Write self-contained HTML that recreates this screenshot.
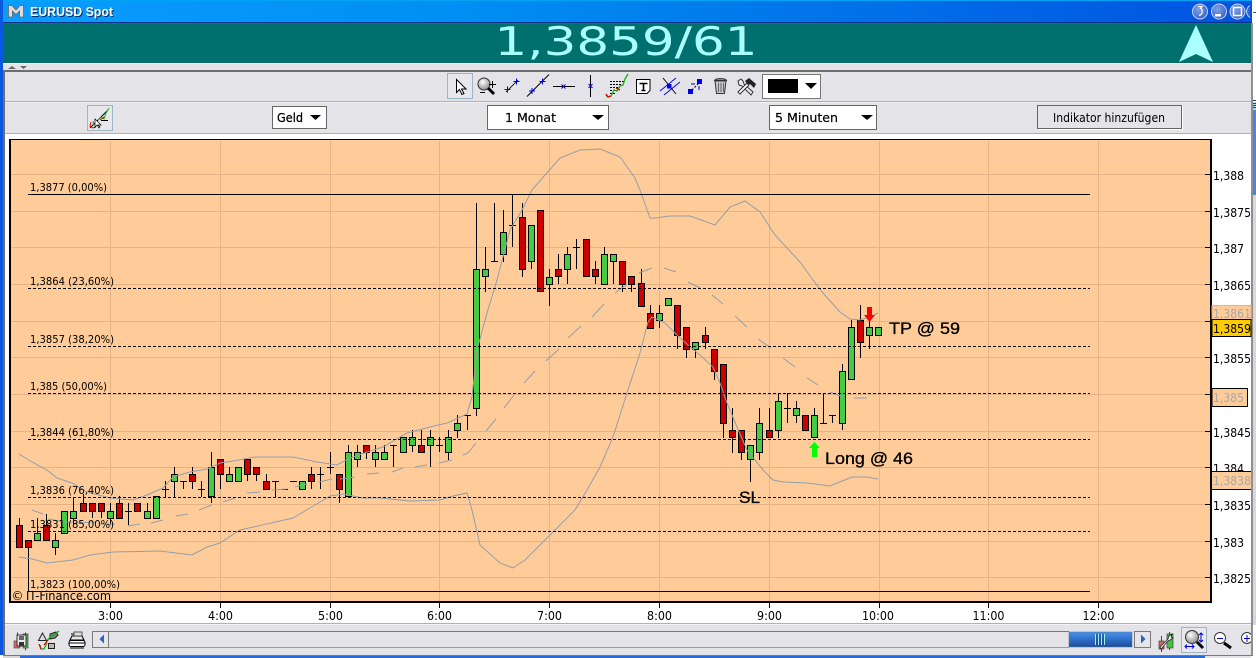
<!DOCTYPE html>
<html><head><meta charset="utf-8"><title>EURUSD Spot</title>
<style>html,body{margin:0;padding:0;background:#fff;overflow:hidden}svg{display:block}
text{font-family:"DejaVu Sans",sans-serif;fill:#000}
.a{font-size:12px}.f{font-size:11px}.g{font-size:12px;fill:#a8a8a8}
.n{font:17px "Liberation Sans",sans-serif;stroke:#000;stroke-width:.3}</style></head>
<body>
<svg xmlns="http://www.w3.org/2000/svg" width="1256" height="658" viewBox="0 0 1256 658">
<defs>
<linearGradient id="tb" x1="0" x2="1" y1="0" y2="0"><stop offset="0" stop-color="#0a9cff"/><stop offset=".35" stop-color="#0090f4"/><stop offset=".7" stop-color="#0070e8"/><stop offset="1" stop-color="#0052e0"/></linearGradient>
<linearGradient id="th" x1="0" x2="0" y1="0" y2="1"><stop offset="0" stop-color="#4a92ea"/><stop offset=".5" stop-color="#2f6fc8"/><stop offset="1" stop-color="#1c4c98"/></linearGradient>
<radialGradient id="wb" cx=".4" cy=".35" r=".7"><stop offset="0" stop-color="#7f9fe8"/><stop offset="1" stop-color="#3a62c8"/></radialGradient>
<radialGradient id="lens" cx=".4" cy=".35" r=".7"><stop offset="0" stop-color="#fff"/><stop offset="1" stop-color="#888"/></radialGradient>
</defs>

<rect width="1256" height="658" fill="#fff"/>
<!-- title bar -->
<rect width="1252" height="23" fill="url(#tb)"/>
<rect width="1252" height="1" fill="#00a4f4"/>
<rect y="22" width="1252" height="1" fill="#03308c"/>
<path d="M8.500 17V5.500h3.500l4 4.500 4-4.500h3.500V17h-4V11l-3.500 3.500L12.500 11v6z" fill="#dcdcdc" stroke="#666" stroke-width=".8"/>
<text x="31" y="17" textLength="83" lengthAdjust="spacingAndGlyphs" style="font:bold 13px 'Liberation Sans',sans-serif;fill:#04306c">EURUSD Spot</text>
<text x="30" y="16" textLength="83" lengthAdjust="spacingAndGlyphs" style="font:bold 13px 'Liberation Sans',sans-serif;fill:#fff">EURUSD Spot</text>
<g stroke="#c8d4f0" stroke-width="1" fill="url(#wb)">
<circle cx="1200" cy="11.500" r="7.500"/><circle cx="1219" cy="11.500" r="7.500"/><circle cx="1237.500" cy="11.500" r="7.500"/><circle cx="1255" cy="11.500" r="7.500" opacity="0"/></g>
<path d="M1250 5.500a7 7 0 0 0 0 12" fill="#3a62c8" stroke="#c8d4f0"/>
<path d="M1198 6.500h4l-1.500 2c2.500 1 2.500 6-1.500 7" fill="none" stroke="#fff" stroke-width="1.200"/>
<rect x="1215" y="14" width="6" height="2.500" fill="#fff"/>
<rect x="1233.500" y="7.500" width="8" height="8" fill="none" stroke="#fff" stroke-width="1.500"/>
<rect x="1253" y="12" width="3" height="1" fill="#555"/>

<!-- side borders -->
<rect x="0" y="0" width="3" height="655" fill="#0a58e2"/>
<rect x="1251" y="23" width="2" height="632" fill="#8f8f8f"/>
<rect x="1253" y="100" width="3" height="1" fill="#333"/>
<rect x="1253" y="102" width="3" height="8" fill="#9cdcf0"/>
<path d="M1253 103.500h3M1253 105.500h3M1253 107.500h3" stroke="#1c4c98"/>
<rect x="1253" y="110" width="3" height="85" fill="#4a86d8"/>
<rect x="1253" y="195" width="3" height="430" fill="#d8d8dc"/>
<rect x="3" y="70" width="2" height="585" fill="#6e6e6e"/>

<!-- price strip -->
<rect x="3" y="23" width="1248" height="40" fill="#00706e"/>
<rect x="3" y="23" width="1248" height="1" fill="#555"/>
<rect x="3" y="63" width="1248" height="1" fill="#fff"/>
<rect x="3" y="64" width="1248" height="6" fill="#e3e3e8"/>
<path d="M8 69l4-3 4 3zM20 66h7l-3.500 3z" fill="#666"/>
<rect x="3" y="70" width="1248" height="2" fill="#6e6e6e"/>
<text x="494.500" y="55" textLength="263" lengthAdjust="spacingAndGlyphs" style="font-size:39px;fill:#aaffff">1,3859/61</text>
<path d="M1196 25L1179 62L1196 54L1213 62Z" fill="#aaffff"/>

<!-- toolbars -->
<rect x="5" y="72" width="1246" height="61" fill="#e3e3e8"/>
<rect x="5" y="101" width="1246" height="1" fill="#9db5c4"/>
<rect x="5" y="102" width="1246" height="1" fill="#f3f3f6"/>
<rect x="5" y="133" width="1246" height="1" fill="#9db5c4"/>

<!-- toolbar icons -->
<rect x="447.500" y="73.500" width="25" height="25" fill="#e8e8ec" stroke="#9db5c4"/>
<path d="M456.500 79.500v13l3-3 2.500 5 2-1-2.500-4.500h4.500z" fill="#fff" stroke="#000"/>
<circle cx="484" cy="84" r="6" fill="url(#lens)" stroke="#333"/>
<path d="M488 88l6 6" stroke="#000" stroke-width="3"/>
<path d="M489 84.500h7M492.500 81v7M480 92.500h5" stroke="#000"/>
<path d="M506 92L518 80" stroke="#000" stroke-width=".8"/>
<path d="M504.500 89.500h6M507.500 86.500v6M513.500 81.500h6M516.500 78.500v6" stroke="#0000e8"/>
<path d="M527 96.500L549 74.500" stroke="#000"/>
<path d="M529 91h6M532 88v6M539.500 81.500h6M542.500 78.500v6" stroke="#0000e8"/>
<path d="M553 86.500H575" stroke="#000"/>
<path d="M561.500 84.500l4 4M565.500 84.500l-4 4" stroke="#0000e8"/>
<path d="M590.500 75V97" stroke="#000"/>
<path d="M588.500 84l4 4M592.500 84l-4 4" stroke="#0000e8"/>
<path d="M610 81.500h14M610 84.500h12M610 87.500h10M610 90.500h8M610 93.500h6" stroke="#000" stroke-dasharray="2 1"/>
<path d="M606 95l2 2 3-1 3-6 3 1 3-5 3-1 2-6 3-5" fill="none" stroke="#12b012" stroke-width="1.300"/>
<path d="M606 94l2 3 3-1M616 88l4 2" fill="none" stroke="#e00000" stroke-width="1.300"/>
<path d="M636.500 79.500h13.500v11l-3 3h-10.500z" fill="#fff" stroke="#000"/>
<path d="M639.500 83.500h8M643.500 83.500v7M641.500 90.500h4" stroke="#000" stroke-width="1.600" fill="none"/>
<path d="M660 91L676 78M664 95L680 82" stroke="#0000e8" stroke-width=".9"/>
<path d="M663 78L676 94" stroke="#000" stroke-width=".9"/>
<rect x="667" y="84" width="4.500" height="4.500" fill="#0000e8"/>
<rect x="688" y="89" width="5" height="5" fill="#0000e8"/><rect x="697" y="79" width="5" height="5" fill="#0000e8"/>
<path d="M692 90L699 83" stroke="#000" stroke-dasharray="2 1.500"/>
<path d="M691 84h4M699 90v-4" stroke="#0000e8"/>
<path d="M714.500 80.500c1-2.500 11-2.500 12 0z" fill="#999" stroke="#333"/>
<path d="M715 81l1.500 12.500h8L726 81z" fill="#c8c8c8" stroke="#333"/>
<path d="M718.500 83v9M721 83v9M723.500 83v9" stroke="#666"/>
<path d="M738 81l3-2 2 2 1 3 9 8-2 3-9-9-3-1z" fill="#e8e8e8" stroke="#333"/>
<path d="M738 92l9-9 2 2-9 9z" fill="#fff" stroke="#333"/>
<path d="M745 81l4-3 7 6-2 4-4-4-2 1z" fill="#222"/>
<!-- colour combo -->
<rect x="762.500" y="74.500" width="58" height="24" fill="#fff" stroke="#777"/>
<rect x="768" y="79" width="30" height="14" fill="#000"/>
<path d="M805 83h12l-6 6z" fill="#000"/>

<!-- second row -->
<rect x="87.500" y="105.500" width="25" height="25" fill="#e8e8ec" stroke="#9db5c4"/>
<path d="M90 128l18-18" stroke="#000"/>
<path d="M91 122l-1 4 3 2 3-1" fill="none" stroke="#e00000"/>
<path d="M93 121l1 4M98 120l3-3 3 2 2-6 3-5" fill="none" stroke="#12b012"/>
<path d="M100 120l4-3" stroke="#e00000"/>
<path d="M101 120.500h7" stroke="#000"/>
<path d="M95 119v8l2-2 2 3 1-1-2-2h3z" fill="#fff" stroke="#000" stroke-width=".7"/>

<rect x="272.500" y="106.500" width="54" height="22" fill="#fff" stroke="#666"/>
<text x="277" y="122" textLength="26" lengthAdjust="spacingAndGlyphs" style="font-size:12px;stroke:#000;stroke-width:.25">Geld</text>
<path d="M310 115h11l-5.500 5z" fill="#000"/>
<rect x="487.500" y="105.500" width="121" height="24" fill="#fff" stroke="#666"/>
<text x="505" y="122" textLength="51" lengthAdjust="spacingAndGlyphs" style="font-size:12px;stroke:#000;stroke-width:.2">1 Monat</text>
<path d="M592 115h12l-6 5z" fill="#000"/>
<rect x="769.500" y="105.500" width="107" height="24" fill="#fff" stroke="#666"/>
<text x="775" y="122" textLength="63" lengthAdjust="spacingAndGlyphs" style="font-size:12px;stroke:#000;stroke-width:.2">5 Minuten</text>
<path d="M861 115h12l-6 5z" fill="#000"/>
<rect x="1037.500" y="105.500" width="144" height="23" fill="#e3e3e8" stroke="#666"/>
<rect x="1038" y="129" width="145" height="1" fill="#fff"/><rect x="1182" y="105" width="1" height="25" fill="#fff"/>
<text x="1053" y="122" textLength="112" lengthAdjust="spacingAndGlyphs" style="font-size:12px">Indikator hinzufügen</text>

<!-- chart background -->
<rect x="5" y="134" width="1246" height="489" fill="#fff"/>
<rect x="10" y="140" width="1201" height="462" fill="#ffcc99"/>
<!-- grid -->
<path d="M11 174.500H1210M11 211.500H1210M11 247.500H1210M11 284.500H1210M11 321.500H1210M11 357.500H1210M11 394.500H1210M11 431.500H1210M11 467.500H1210M11 504.500H1210M11 541.500H1210M11 577.500H1210" stroke="#e5b388"/>
<path d="M110.500 141V601M220.500 141V601M330.500 141V601M439.500 141V601M549.500 141V601M659.500 141V601M769.500 141V601M879.500 141V601M988.500 141V601M1098.500 141V601" stroke="#e5b388"/>

<!-- wicks -->
<path stroke="#000" fill="none" d="M19.500 518V526M28.500 540V591M37.500 518V534M46.500 514V526M55.500 533V555M73.500 497V525M83.500 494V504M92.500 511V518M101.500 511V518M110.500 503V525M119.500 496V504M128.500 503V525M147.500 503V512M165.500 481V497M174.500 467V497M183.500 481V489M192.500 467V489M201.500 481V497M211.500 452V503M220.500 474V489M229.500 467V475M247.500 474V481M256.500 474V481M266.500 474V482M275.500 481V497M311.500 467V489M320.500 467V489M330.500 452V474M339.500 489V503M348.500 445V453M357.500 445V467M366.500 452V459M375.500 445V467M384.500 445V453M393.500 445V467M412.500 430V452M421.500 430V446M430.500 430V467M439.500 437V452M448.500 430V460M457.500 415V438M467.500 415V430M476.500 203V416M485.500 247V292M494.500 203V261M503.500 210V262M512.500 195V247M522.500 203V277M531.500 261V269M549.500 269V306M558.500 254V284M567.500 247V284M576.500 239V269M595.500 261V284M604.500 247V255M613.500 261V284M622.500 284V292M631.500 284V292M641.500 269V284M650.500 305V314M659.500 305V328M677.500 335V349M686.500 349V358M695.500 349V358M705.500 327V349M714.500 371V380M723.500 423V438M732.500 408V453M741.500 452V460M750.500 459V482M759.500 408V460M769.500 408V431M778.500 393V438M787.500 393V423M796.500 401V423M814.500 408V416M823.500 393V423M832.500 415V423M842.500 364V430M851.500 320V328M860.500 305V358M869.500 320V349"/>
<!-- doji bars -->
<path stroke="#000" d="M125 511.500h7M162 489.500h7M180 481.500h7M198 489.500h7M272 481.500h7M281 489.500h7M290 481.500h7M317 474.500h7M327 467.500h7M390 445.500h7M436 445.500h7M464 415.500h7M491 261.500h7M509 225.500h7M573 247.500h7M784 408.500h7M820 423.500h7M829 415.500h7"/>
<!-- red bodies -->
<path fill="#cc0000" stroke="#000" d="M16.500 525.500h6v22h-6zM25.500 540.500h6v7h-6zM43.500 525.500h6v15h-6zM80.500 503.500h6v8h-6zM89.500 503.500h6v8h-6zM98.500 503.500h6v8h-6zM116.500 503.500h6v15h-6zM134.500 503.500h6v8h-6zM189.500 474.500h6v7h-6zM217.500 459.500h6v15h-6zM244.500 459.500h6v15h-6zM253.500 467.500h6v7h-6zM263.500 481.500h6v8h-6zM308.500 474.500h6v7h-6zM336.500 474.500h6v15h-6zM363.500 445.500h6v7h-6zM418.500 445.500h6v7h-6zM519.500 217.500h6v52h-6zM537.500 210.500h6v81h-6zM555.500 269.500h6v7h-6zM583.500 239.500h6v37h-6zM592.500 269.500h6v7h-6zM619.500 261.500h6v23h-6zM628.500 276.500h6v8h-6zM638.500 283.500h6v23h-6zM647.500 313.500h6v15h-6zM674.500 305.500h6v30h-6zM683.500 327.500h6v22h-6zM702.500 335.500h6v7h-6zM711.500 349.500h6v22h-6zM720.500 364.500h6v59h-6zM729.500 430.500h6v7h-6zM738.500 430.500h6v22h-6zM766.500 430.500h6v7h-6zM802.500 415.500h6v15h-6zM857.500 320.500h6v22h-6z"/>
<!-- green bodies -->
<path fill="#44cc44" stroke="#000" d="M34.500 533.500h6v7h-6zM52.500 540.500h6v7h-6zM61.500 511.500h6v22h-6zM70.500 511.500h6v7h-6zM107.500 511.500h6v7h-6zM144.500 511.500h6v7h-6zM153.500 496.500h6v22h-6zM171.500 474.500h6v7h-6zM208.500 467.500h6v29h-6zM226.500 474.500h6v7h-6zM235.500 467.500h6v14h-6zM299.500 481.500h6v8h-6zM345.500 452.500h6v44h-6zM354.500 452.500h6v7h-6zM372.500 452.500h6v7h-6zM381.500 452.500h6v7h-6zM400.500 437.500h6v15h-6zM409.500 437.500h6v8h-6zM427.500 437.500h6v8h-6zM445.500 437.500h6v15h-6zM454.500 423.500h6v7h-6zM473.500 269.500h6v139h-6zM482.500 269.500h6v7h-6zM500.500 232.500h6v22h-6zM528.500 225.500h6v36h-6zM546.500 277.500h6v7h-6zM564.500 254.500h6v15h-6zM601.500 254.500h6v30h-6zM610.500 254.500h6v7h-6zM656.500 313.500h6v7h-6zM665.500 298.500h6v7h-6zM692.500 342.500h6v7h-6zM747.500 445.500h6v14h-6zM756.500 423.500h6v29h-6zM775.500 401.500h6v29h-6zM793.500 408.500h6v7h-6zM811.500 415.500h6v22h-6zM839.500 371.500h6v52h-6zM848.500 327.500h6v52h-6zM866.500 327.500h6v8h-6zM875.500 327.500h6v8h-6z"/>

<!-- Bollinger bands -->
<g fill="none" stroke="#939eaa" stroke-width="1">
<polyline points="19,454 32,462 47,470 57,478 72,483 87,492 110,498 133,500 147,495 163,488 173,477 190,472 207,469 220,463 233,461 255,457 293,457 317,462 337,465 348,459 367,452 383,447 407,433 430,427 447,423 467,414 472,397 477,350 487,313 497,280 510,230 522,210 532,190 545,175 560,158 580,150 600,149 620,157 635,178 640,190 650,218 655,218 670,216 690,216 715,225 730,207 745,201 760,212 775,235 800,262 813,280 823,293 840,312 850,319 860,320 870,317 878,313"/>
<polyline points="19,557 32,559 47,563 73,560 90,555 113,552 160,551 192,555 207,547 220,543 240,530 293,518 310,508 330,496 343,494 363,498 380,498 410,501 440,500 453,496 467,493 472,510 480,545 500,563 513,568 525,560 545,540 575,510 587,490 600,467 613,437 627,393 640,353 648,322 652,317 665,323 677,335 688,345 700,355 713,367 720,383 727,403 737,427 747,450 763,470 773,480 783,482 807,483 830,486 852,477 867,477 878,479"/>
<path d="M32 510L43 514M48 519L72 523M75 523L96 522M100 524H115M128 526L140 524M151 523L163 520M176 516L188 514M199 510L212 505M223 502L235 498M247 493L260 492M272 490L287 489M295 487L307 484M319 482L332 479M340 479L355 477M367 474L379 473M392 472L403 468M415 467L427 465M439 463L452 460M463 455L468 453L476 443M486 431L496 419M504 408L514 395M524 383L535 371M546 361L559 349M568 338L581 326M592 317L604 304M615 293L627 284M639 273L652 268M664 268L676 272M688 282L700 288M712 295L723 304M735 316L747 327M758 339L771 348M783 358L795 367M807 378L818 385M830 392L843 397M854 398H867"/>
</g>

<!-- fib lines -->
<path d="M28 194.500H1090M28 591.500H1090" stroke="#000"/>
<path d="M28 288.500H1090M28 346.500H1090M28 393.500H1090M28 439.500H1090M28 497.500H1090M28 531.500H1090" stroke="#000" stroke-dasharray="3 2"/>
<text class="f" x="30" y="191" textLength="77" lengthAdjust="spacingAndGlyphs">1,3877 (0,00%)</text>
<text class="f" x="30" y="285" textLength="84" lengthAdjust="spacingAndGlyphs">1,3864 (23,60%)</text>
<text class="f" x="30" y="343" textLength="84" lengthAdjust="spacingAndGlyphs">1,3857 (38,20%)</text>
<text class="f" x="30" y="390" textLength="77" lengthAdjust="spacingAndGlyphs">1,385 (50,00%)</text>
<text class="f" x="30" y="436" textLength="84" lengthAdjust="spacingAndGlyphs">1,3844 (61,80%)</text>
<text class="f" x="30" y="494" textLength="84" lengthAdjust="spacingAndGlyphs">1,3836 (76,40%)</text>
<text class="f" x="30" y="528" textLength="84" lengthAdjust="spacingAndGlyphs">1,3831 (85,00%)</text>
<text class="f" x="30" y="588" textLength="90" lengthAdjust="spacingAndGlyphs">1,3823 (100,00%)</text>
<text class="a" x="11.500" y="600">©</text>
<text class="a" x="26" y="600" textLength="85" lengthAdjust="spacingAndGlyphs">IT-Finance.com</text>

<!-- annotations -->
<path d="M812 457v-9h-3l5.500-6 5.500 6h-3v9z" fill="#00ff00"/>
<path d="M867 307h5v8h3l-5.500 7-5.500-7h3z" fill="#ff0000"/>
<text class="n" x="825" y="464" textLength="88" lengthAdjust="spacingAndGlyphs">Long @ 46</text>
<text class="n" x="889" y="334" textLength="71" lengthAdjust="spacingAndGlyphs">TP @ 59</text>
<text class="n" x="739" y="503" textLength="21" lengthAdjust="spacingAndGlyphs">SL</text>

<!-- chart frame -->
<path d="M9 139.500H1212" stroke="#000"/>
<path d="M10 139V603M1211 139V603M9 602H1212" stroke="#000" stroke-width="2" fill="none"/>
<!-- axis ticks -->
<path d="M1205 174.500h6M1205 211.500h6M1205 247.500h6M1205 284.500h6M1205 321.500h6M1205 357.500h6M1205 394.500h6M1205 431.500h6M1205 467.500h6M1205 504.500h6M1205 541.500h6M1205 577.500h6" stroke="#000"/>
<path d="M110.500 603v5M220.500 603v5M330.500 603v5M439.500 603v5M549.500 603v5M659.500 603v5M769.500 603v5M879.500 603v5M988.500 603v5M1098.500 603v5" stroke="#000"/>
<!-- axis labels -->
<text class="a" x="1213" y="180" textLength="31" lengthAdjust="spacingAndGlyphs">1,388</text>
<text class="a" x="1213" y="217" textLength="38" lengthAdjust="spacingAndGlyphs">1,3875</text>
<text class="a" x="1213" y="253" textLength="31" lengthAdjust="spacingAndGlyphs">1,387</text>
<text class="a" x="1213" y="290" textLength="38" lengthAdjust="spacingAndGlyphs">1,3865</text>
<text class="a" x="1213" y="363" textLength="38" lengthAdjust="spacingAndGlyphs">1,3855</text>
<text class="a" x="1213" y="437" textLength="38" lengthAdjust="spacingAndGlyphs">1,3845</text>
<text class="a" x="1213" y="473" textLength="31" lengthAdjust="spacingAndGlyphs">1,384</text>
<text class="a" x="1213" y="510" textLength="38" lengthAdjust="spacingAndGlyphs">1,3835</text>
<text class="a" x="1213" y="547" textLength="31" lengthAdjust="spacingAndGlyphs">1,383</text>
<text class="a" x="1213" y="583" textLength="38" lengthAdjust="spacingAndGlyphs">1,3825</text>
<rect x="1212" y="305.500" width="39" height="14" fill="#ffcc99" stroke="#e5b388"/>
<text class="g" x="1213" y="318" textLength="38" lengthAdjust="spacingAndGlyphs">1,3861</text>
<rect x="1212" y="319.500" width="39" height="17" fill="#ffcc00" stroke="#000"/>
<text class="a" x="1213" y="333" textLength="38" lengthAdjust="spacingAndGlyphs">1,3859</text>
<rect x="1212" y="388.500" width="35.500" height="18" fill="#ffcc99" stroke="#000"/>
<text class="g" x="1213" y="402" textLength="31" lengthAdjust="spacingAndGlyphs">1,385</text>
<rect x="1212" y="471.500" width="39" height="18" fill="#ffcc99"/>
<path d="M1212 471.500h39M1212 489.500h39" stroke="#000"/>
<text class="g" x="1213" y="485" textLength="38" lengthAdjust="spacingAndGlyphs">1,3838</text>
<!-- time labels -->
<text class="a" x="98" y="620" textLength="25" lengthAdjust="spacingAndGlyphs">3:00</text>
<text class="a" x="208" y="620" textLength="25" lengthAdjust="spacingAndGlyphs">4:00</text>
<text class="a" x="318" y="620" textLength="25" lengthAdjust="spacingAndGlyphs">5:00</text>
<text class="a" x="427" y="620" textLength="25" lengthAdjust="spacingAndGlyphs">6:00</text>
<text class="a" x="537" y="620" textLength="25" lengthAdjust="spacingAndGlyphs">7:00</text>
<text class="a" x="647" y="620" textLength="25" lengthAdjust="spacingAndGlyphs">8:00</text>
<text class="a" x="757" y="620" textLength="25" lengthAdjust="spacingAndGlyphs">9:00</text>
<text class="a" x="862" y="620" textLength="32" lengthAdjust="spacingAndGlyphs">10:00</text>
<text class="a" x="972.500" y="620" textLength="32" lengthAdjust="spacingAndGlyphs">11:00</text>
<text class="a" x="1082.500" y="620" textLength="32" lengthAdjust="spacingAndGlyphs">12:00</text>

<!-- bottom toolbar -->
<rect x="5" y="623" width="1246" height="32" fill="#e3e3e8"/>
<rect x="5" y="623" width="1246" height="1" fill="#9db5c4"/>
<rect x="5" y="624" width="1246" height="1" fill="#f3f3f6"/>
<rect x="3" y="655" width="1250" height="1" fill="#7a7a7a"/>
<rect x="20" y="656" width="1185" height="2" fill="#2a6ad8"/>
<rect x="0" y="655" width="3" height="3" fill="#fff"/><rect x="3" y="656" width="17" height="2" fill="#d8d8d8"/>
<rect x="1205" y="656" width="46" height="2" fill="#e3e3e8"/>

<!-- bottom-left icons -->
<path d="M17.500 632.500v8M25.500 632.500v18" stroke="#444"/>
<rect x="14" y="641" width="6" height="7" fill="#e86060" stroke="#555" stroke-width=".7"/>
<rect x="23" y="634" width="5" height="14" fill="#44c044" stroke="#444" stroke-width=".7"/>
<rect x="17" y="635" width="9" height="11" fill="#e8e8e8" stroke="#333"/>
<rect x="19" y="636" width="5" height="4" fill="#666"/><rect x="19" y="642" width="5" height="4" fill="#333"/>
<path d="M42.500 633l-4 7.500h8z" fill="#ddd" stroke="#222"/>
<path d="M50 634l6-2 2 3-3 3-5 1z" fill="#888" stroke="#222"/>
<rect x="48.500" y="643.500" width="6" height="5" fill="#bbb" stroke="#222"/>
<path d="M47 641l3-4 4-2 5-4" fill="none" stroke="#10b010" stroke-width="1.300"/>
<path d="M40 645l1 4 3 0 3-6" fill="none" stroke="#10b010" stroke-width="1.300"/>
<path d="M39 644l2 5M44 645l4-5" fill="none" stroke="#e00000" stroke-width="1.200"/>
<path d="M72 636h10l2 4H70z" fill="#e8e8e8" stroke="#000"/>
<rect x="69" y="640.500" width="16" height="6" rx="2" fill="#fff" stroke="#000"/>
<path d="M71 634h10M69 643h16M70 648h14" stroke="#000"/>
<rect x="74" y="632" width="8" height="4" fill="#ddd" stroke="#222" stroke-width=".7"/>

<!-- scrollbar -->
<rect x="108" y="631" width="961" height="1" fill="#7a7a7a"/>
<rect x="108" y="647" width="961" height="1" fill="#9a9a9a"/>
<rect x="92.500" y="631.500" width="16" height="16" fill="#e6e6ea" stroke="#7a7a7a"/>
<path d="M104 634.500v9l-4.500-4.500z" fill="#2a62c8"/>
<rect x="1069" y="632" width="63" height="15" fill="url(#th)" stroke="#58708c" stroke-width=".5"/>
<path d="M1095.500 634v11M1098.500 634v11M1101.500 634v11M1104.500 634v11" stroke="#9cf0ff"/>
<path d="M1097 634v11M1100 634v11M1103 634v11" stroke="#16408a"/>
<rect x="1134.500" y="631.500" width="16" height="16" fill="#e6e6ea" stroke="#7a7a7a"/>
<path d="M1141 634.500v9l4.500-4.500z" fill="#2a62c8"/>

<!-- bottom-right icons -->
<path d="M1161.500 636v16M1169.500 632v18" stroke="#444"/>
<rect x="1159" y="641" width="5" height="8" fill="#e06060" stroke="#444" stroke-width=".7"/>
<rect x="1167" y="634" width="6" height="14" fill="#44c044" stroke="#444" stroke-width=".7"/>
<path d="M1160 647l8-8 1-3 3-2-1 3 2 1-3 2-2 1-7 8z" fill="#fff" stroke="#222" stroke-width=".8"/>
<rect x="1181.500" y="627.500" width="25" height="25" fill="#e8e8ec" stroke="#9db5c4"/>
<circle cx="1192" cy="637" r="6.500" fill="url(#lens)" stroke="#333"/>
<path d="M1197 642l6 6" stroke="#000" stroke-width="3"/>
<path d="M1201 633v9M1199 635l2-2 2 2M1199 640l2 2 2-2M1185 646.500h9M1187 644.500l-2 2 2 2M1192 644.500l2 2-2 2" stroke="#0000e8" fill="none"/>
<circle cx="1220" cy="638" r="5.500" fill="#fff" stroke="#333"/>
<path d="M1224 643l7 5" stroke="#000" stroke-width="3"/>
<path d="M1217 638.500h6" stroke="#0000e8"/>
<circle cx="1247" cy="638" r="5.500" fill="#fff" stroke="#333"/>
<path d="M1244 638.500h6M1247 635v7" stroke="#0000e8"/>
<rect x="1251" y="624" width="2" height="31" fill="#8f8f8f"/>
<rect x="1253" y="625" width="3" height="33" fill="#fff"/>
</svg>
</body></html>
